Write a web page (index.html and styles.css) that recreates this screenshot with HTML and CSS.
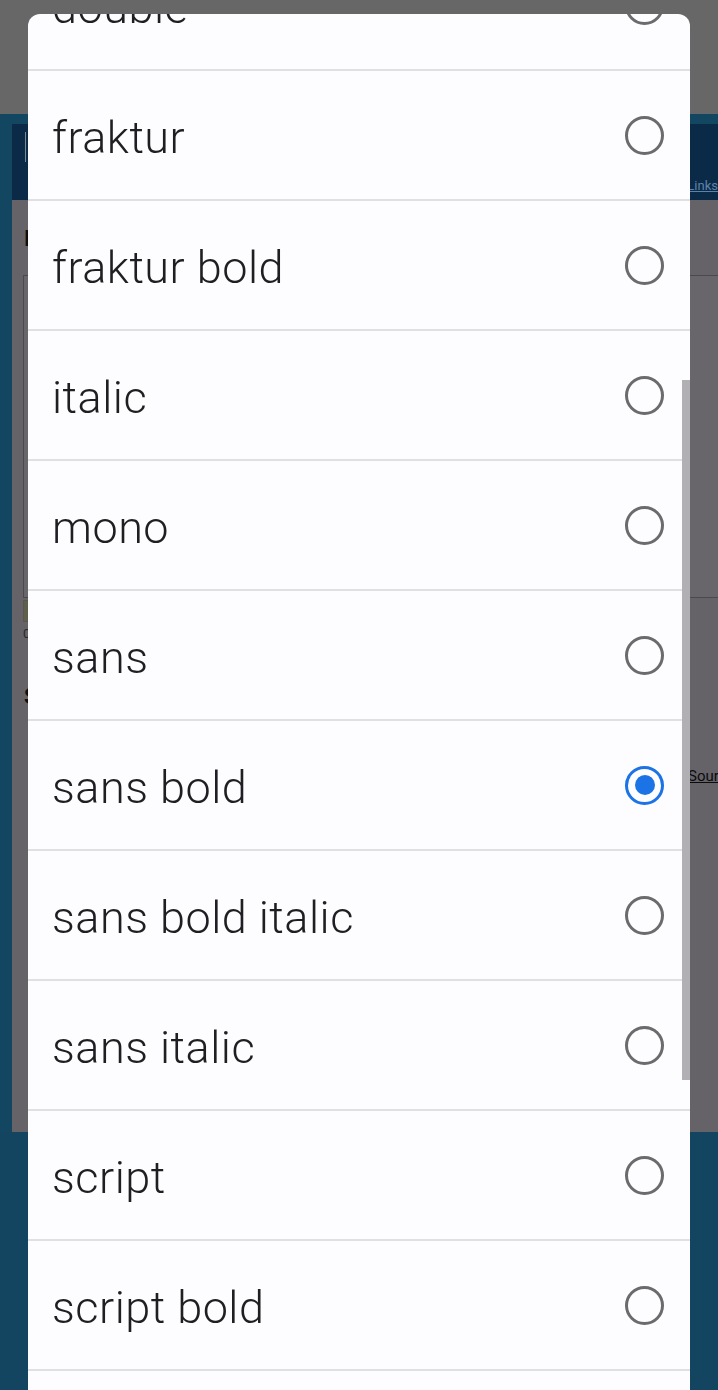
FILE: index.html
```html
<!DOCTYPE html>
<html lang="en">
<head>
<meta charset="utf-8">
<title>Font style picker</title>
<link rel="stylesheet" href="styles.css">
</head>
<body>
<div class="page">
  <div class="topbar"></div>
  <div class="site">
    <header class="masthead">
      <div class="logo"></div>
      <a class="nav-link" href="#">Links</a>
    </header>
    <main class="panel">
      <h2 class="panel-title">Input</h2>
      <div class="textbox"></div>
      <div class="swatch"></div>
      <p class="count">0 characters</p>
      <h2 class="panel-title second">Style</h2>
      <div class="source-row"><a class="source" href="#">Source</a></div>
    </main>
    <div class="site-foot"></div>
  </div>
</div>

<div class="dialog" role="dialog">
  <ul class="options">
    <li class="option"><span class="label">double</span><span class="radio"></span></li>
    <li class="option"><span class="label">fraktur</span><span class="radio"></span></li>
    <li class="option"><span class="label">fraktur bold</span><span class="radio"></span></li>
    <li class="option"><span class="label">italic</span><span class="radio"></span></li>
    <li class="option"><span class="label">mono</span><span class="radio"></span></li>
    <li class="option"><span class="label">sans</span><span class="radio"></span></li>
    <li class="option"><span class="label">sans bold</span><span class="radio checked"></span></li>
    <li class="option"><span class="label">sans bold italic</span><span class="radio"></span></li>
    <li class="option"><span class="label">sans italic</span><span class="radio"></span></li>
    <li class="option"><span class="label">script</span><span class="radio"></span></li>
    <li class="option"><span class="label">script bold</span><span class="radio"></span></li>
    <li class="option"><span class="label">script italic</span><span class="radio"></span></li>
  </ul>
  <div class="scrollbar"></div>
</div>
</body>
</html>
```

FILE: styles.css
```css
html, body {
  margin: 0;
  padding: 0;
  height: 100%;
  overflow: hidden;
}

body {
  background: #134560;
  font-family: Roboto, "Liberation Sans", sans-serif;
}

.page {
  display: flex;
  flex-direction: column;
}

.topbar {
  height: 114px;
  background: #676767;
}

.site {
  background: #134660;
  padding: 10px 0 0 12px;
}

.masthead {
  height: 76px;
  background: #0b2a47;
  display: flex;
  align-items: flex-end;
  overflow: hidden;
}

.logo {
  width: 4px;
  height: 30px;
  margin: 0 0 38px 13px;
  background: #7c8791;
}

.nav-link {
  margin: 0 0 7px 662px;
  color: #5d83aa;
  font-size: 13px;
  text-decoration: underline;
  white-space: nowrap;
}

.panel {
  height: 932px;
  background: #656268;
  padding: 0 0 0 11px;
  overflow: hidden;
  box-sizing: border-box;
}

.panel-title {
  margin: 0;
  padding-top: 28px;
  height: 75px;
  box-sizing: border-box;
  font-size: 22px;
  font-weight: bold;
  color: #0e0e10;
  line-height: 22px;
  padding-left: 1px;
}

.panel-title.second {
  padding-top: 10px;
  height: 40px;
}

.textbox {
  width: 900px;
  height: 321px;
  border: 1px solid #4b494e;
  background: #68656b;
}

.swatch {
  width: 20px;
  height: 20px;
  margin-top: 2px;
  border: 1px solid #58574a;
  background: #5f5f4c;
}

.count {
  margin: 4px 0 0;
  font-size: 13px;
  color: #2a292c;
  line-height: 16px;
  height: 50px;
}

.source-row {
  display: flex;
  padding: 51px 0 0 665px;
}

.source {
  color: #0b0b0c;
  font-size: 15px;
  text-decoration: underline;
  white-space: nowrap;
}

.site-foot {
  height: 300px;
  margin-left: -12px;
  background: #134560;
}

/* dialog */
.dialog {
  position: fixed;
  left: 28px;
  top: 14px;
  width: 662px;
  bottom: -20px;
  background: #fdfcfe;
  border-radius: 12px;
  overflow: hidden;
}

.options {
  list-style: none;
  margin: -73px 0 0;
  padding: 0;
}

.option {
  height: 128px;
  border-bottom: 2px solid #e1dfe4;
  display: flex;
  align-items: center;
  justify-content: space-between;
  padding: 0 26px 0 24px;
}

.label {
  font-family: Roboto, "Liberation Sans", sans-serif;
  font-size: 45px;
  font-weight: 300;
  letter-spacing: 0.5px;
  line-height: 1;
  color: #1f1e22;
  padding-top: 5px;
}

.radio {
  width: 39px;
  height: 39px;
  box-sizing: border-box;
  border: 3px solid #6b6b6e;
  border-radius: 50%;
  display: flex;
  align-items: center;
  justify-content: center;
  flex-shrink: 0;
}

.radio.checked {
  border-color: #1b73e6;
  border-width: 3.5px;
}

.radio.checked::after {
  content: "";
  width: 20px;
  height: 20px;
  border-radius: 50%;
  background: #1b73e6;
}

.scrollbar {
  position: absolute;
  right: 0;
  top: 366px;
  width: 8px;
  height: 700px;
  background: #b1afb4;
}
```
